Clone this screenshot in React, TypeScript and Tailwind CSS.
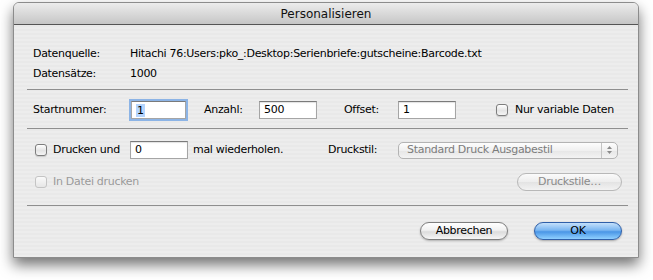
import React from 'react';

const font = { fontFamily: '"DejaVu Sans", "Liberation Sans", sans-serif' };

const Checkbox = ({ disabled = false }: { disabled?: boolean }) => (
  <span
    className={`inline-block w-[12px] h-[12px] rounded-[3px] border shrink-0 ${
      disabled
        ? 'border-[#c4c4c4] bg-[linear-gradient(#fafafa,#e6e6e6)]'
        : 'border-[#7d7d7d] bg-[linear-gradient(#ffffff,#e4e4e4_55%,#f4f4f4)] shadow-[0_1px_1px_rgba(0,0,0,0.15)]'
    }`}
  />
);

const Field = ({ value, focused = false, width = 'w-[58px]' }: { value: string; focused?: boolean; width?: string }) => (
  <div
    className={`${width} h-[18px] bg-white border border-[#a5a5a5] border-t-[#7a7a7a] flex items-center pl-[4px] text-black ${
      focused ? 'shadow-[0_0_0_2px_#8cb4e6]' : 'shadow-[inset_0_1px_1px_rgba(0,0,0,0.12)]'
    }`}
  >
    {focused ? <span className="bg-[#b5d5fe] px-[1px] leading-[13px]">{value}</span> : value}
  </div>
);

const Separator = ({ className = '' }: { className?: string }) => (
  <div className={`ml-[13px] mr-[10px] h-px bg-[#8f8f8f] ${className}`} />
);

export default function App() {
  return (
    <div className="w-[653px] h-[280px] bg-white overflow-hidden pt-[2px] pl-[13px]" style={font}>
      <div className="w-[626px] h-[256px] flex flex-col rounded-t-[6px] border border-[#8c8c8c] bg-[#ececec] bg-[repeating-linear-gradient(0deg,#ededed_0px,#ededed_2px,#e9e9e9_2px,#e9e9e9_4px)] shadow-[0_7px_14px_rgba(0,0,0,0.55)] text-[11px] tracking-[-0.3px] text-black">
        {/* title bar */}
        <div className="h-[22px] shrink-0 rounded-t-[5px] border-b border-[#555555] bg-[linear-gradient(#ececec,#d9d9d9_50%,#c6c6c6)] flex items-center justify-center text-[12px] tracking-normal text-[#111111]">
          Personalisieren
        </div>

        <div className="pl-[19px] pt-[19px]">
          <div className="h-[20px] flex items-center">
            <span className="w-[97px]">Datenquelle:</span>
            <span>Hitachi 76:Users:pko_:Desktop:Serienbriefe:gutscheine:Barcode.txt</span>
          </div>
          <div className="h-[20px] flex items-center">
            <span className="w-[97px]">Datensätze:</span>
            <span>1000</span>
          </div>
        </div>

        <Separator className="mt-[5px]" />

        <div className="mt-[10px] h-[20px] pl-[19px] flex items-center">
          <span className="w-[98px]">Startnummer:</span>
          <Field value="1" focused width="w-[55px]" />
          <span className="ml-[18px] w-[55px]">Anzahl:</span>
          <Field value="500" />
          <span className="ml-[27px] w-[54px]">Offset:</span>
          <Field value="1" />
          <span className="ml-[40px] flex items-center gap-[7px]">
            <Checkbox />
            Nur variable Daten
          </span>
        </div>

        <Separator className="mt-[8px]" />

        <div className="mt-[11px] h-[20px] pl-[21px] flex items-center">
          <Checkbox />
          <span className="ml-[6px] w-[77px]">Drucken und</span>
          <Field value="0" />
          <span className="ml-[5px] w-[135px]">mal wiederholen.</span>
          <span className="w-[70px]">Druckstil:</span>
          <div className="w-[220px] h-[17px] rounded-[5px] border border-[#b3b3b3] bg-[linear-gradient(#fdfdfd,#f0f0f0_50%,#e6e6e6_51%,#f3f3f3)] flex items-center text-[#7c7c7c]">
            <span className="flex-1 pl-[8px]">Standard Druck Ausgabestil</span>
            <span className="w-[16px] h-full border-l border-[#c4c4c4] flex items-center justify-center">
              <svg width="7" height="10" viewBox="0 0 7 10">
                <path d="M3.5 1 L6 4 L1 4 Z" fill="#8a8a8a" />
                <path d="M3.5 9 L6 6 L1 6 Z" fill="#8a8a8a" />
              </svg>
            </span>
          </div>
        </div>

        <div className="mt-[12px] h-[20px] pl-[21px] pr-[16px] flex items-center">
          <Checkbox disabled />
          <span className="ml-[6px] text-[#9a9a9a]">In Datei drucken</span>
          <div className="ml-auto w-[105px] h-[18px] rounded-full border border-[#b8b8b8] bg-[linear-gradient(#fbfbfb,#ededed_50%,#e3e3e3_51%,#f2f2f2)] flex items-center justify-center text-[#8a8a8a]">
            Druckstile…
          </div>
        </div>

        <Separator className="mt-[13px]" />

        <div className="mt-[15px] h-[20px] pr-[16px] flex items-center justify-end gap-[26px]">
          <div className="w-[88px] h-[18px] rounded-full border border-[#7e7e7e] bg-[linear-gradient(#ffffff,#f1f1f1_45%,#dcdcdc_55%,#f6f6f6)] shadow-[0_1px_2px_rgba(0,0,0,0.25)] flex items-center justify-center">
            Abbrechen
          </div>
          <div className="w-[88px] h-[18px] rounded-full border border-[#2f5fa8] bg-[linear-gradient(#c4e0fb,#7ab6f1_45%,#4a96e6_55%,#8fd0ff)] shadow-[0_1px_2px_rgba(0,0,0,0.3)] flex items-center justify-center">
            OK
          </div>
        </div>
      </div>
    </div>
  );
}
